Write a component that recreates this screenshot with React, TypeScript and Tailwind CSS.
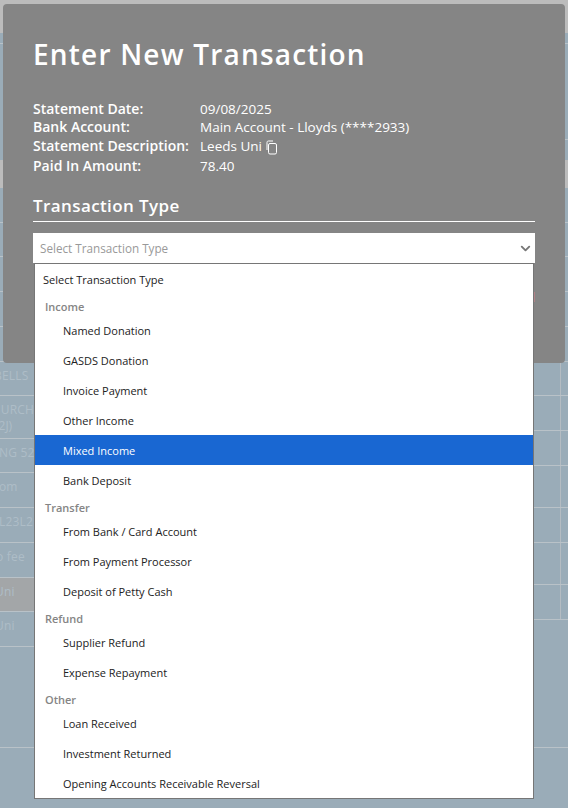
import React from 'react';
import { ChevronDown } from 'lucide-react';

const font = { fontFamily: '"Open Sans", sans-serif' };

const groups = [
  { label: 'Income', items: ['Named Donation', 'GASDS Donation', 'Invoice Payment', 'Other Income', 'Mixed Income', 'Bank Deposit'] },
  { label: 'Transfer', items: ['From Bank / Card Account', 'From Payment Processor', 'Deposit of Petty Cash'] },
  { label: 'Refund', items: ['Supplier Refund', 'Expense Repayment'] },
  { label: 'Other', items: ['Loan Received', 'Investment Returned', 'Opening Accounts Receivable Reversal'] },
];

const details = [
  { label: 'Statement Date:', value: '09/08/2025', cls: '' },
  { label: 'Bank Account:', value: 'Main Account - Lloyds (****2933)', cls: '' },
  { label: 'Statement Description:', value: 'Leeds Uni', copy: true, cls: 'mt-px' },
  { label: 'Paid In Amount:', value: '78.40', cls: 'mt-[2px]' },
];

const line = 'border-b border-[#b9c2c8]';
const cellText = 'block whitespace-nowrap pt-[6px] text-[12px] leading-[16px] tracking-[0.2px] text-[#aebdc7]';

function CopyIcon() {
  return (
    <svg width="12" height="15" viewBox="0 0 12 15" fill="none" stroke="white" strokeWidth="1" className="ml-[4px] mt-[3px]">
      <path d="M1 10V2.5C1 1.4 1.6 1 2.5 1H7" />
      <rect x="2.5" y="3.5" width="8" height="10.5" rx="1.5" />
    </svg>
  );
}

// the page table that shows round the edges of the dialog
function LeftColumn() {
  return (
    <div className="flex w-[284px] flex-col">
      <div className={`h-[11px] ${line}`} />
      <div className="h-[116px]" />
      <div className="h-[28px] bg-[#bcbcbc]" />
      <div className={`h-[35px] ${line}`} />
      <div className={`h-[34px] ${line}`} />
      <div className={`h-[35px] ${line}`} />
      <div className={`h-[35px] ${line}`} />
      <div className={`h-[35px] ${line}`} />
      <div className={`h-[34px] ${line}`}><span className={`${cellText} -ml-[6px]`}>BELLS</span></div>
      <div className={`h-[43px] ${line}`}>
        <span className={`${cellText} -ml-[16px]`}>CHURCH</span>
        <span className="-ml-[5px] block text-[12px] leading-[15px] text-[#aebdc7]">(2J)</span>
      </div>
      <div className={`h-[34px] ${line}`}><span className={`${cellText} -ml-[1px]`}>NG 52</span></div>
      <div className={`h-[35px] ${line}`}><span className={`${cellText} -ml-[7px]`}>com</span></div>
      <div className={`h-[35px] ${line}`}><span className={`${cellText} -ml-[1px]`}>L23L2</span></div>
      <div className={`h-[35px] ${line}`}><span className={`${cellText} -ml-[4px]`}>o fee</span></div>
      <div className={`h-[34px] bg-[#a3a6a8] ${line}`}><span className={`${cellText} -ml-[5px]`}>Uni</span></div>
      <div className={`h-[35px] ${line}`}><span className={`${cellText} -ml-[5px]`}>Uni</span></div>
      <div className={`h-[101px] ${line}`} />
    </div>
  );
}

function RightCell({ h }: { h: string }) {
  return (
    <div className={`${h} ${line}`}>
      <div className="ml-auto h-full w-[8px] border-l border-[#b4bcc2]" />
    </div>
  );
}

function RightColumn() {
  return (
    <div className="flex w-[284px] flex-col">
      <div className={`h-[11px] ${line}`} />
      <div className={`h-[96px] ${line}`} />
      <div className="h-[20px]" />
      <div className="h-[28px] bg-[#bcbcbc]" />
      <div className={`h-[35px] ${line}`} />
      <div className={`h-[34px] ${line}`} />
      <div className={`h-[35px] ${line}`} />
      <div className={`h-[35px] ${line}`} />
      <div className={`h-[35px] ${line}`} />
      <RightCell h="h-[34px]" />
      <RightCell h="h-[35px]" />
      <RightCell h="h-[35px]" />
      <RightCell h="h-[42px]" />
      <RightCell h="h-[35px]" />
      <RightCell h="h-[42px]" />
      <RightCell h="h-[35px]" />
      <div className={`h-[128px] ${line}`} />
    </div>
  );
}

export default function App() {
  return (
    <div className="relative h-[808px] w-[568px] overflow-hidden bg-[#9aacb8]" style={font}>
      <div className="h-[33px] bg-[#bcbcbc]" />
      <div className="flex">
        <LeftColumn />
        <RightColumn />
      </div>

      {/* modal */}
      <div className="absolute left-[3px] top-[4px] h-[359px] w-[562px] rounded-[4px] bg-[#858585] px-[30px] pt-[31px] text-white">
        <h1 className="text-[28px] font-semibold leading-[38px] tracking-[1.2px]">Enter New Transaction</h1>
        <div className="mt-[27px] flex flex-col leading-[18px]">
          {details.map((d) => (
            <div key={d.label} className={`flex ${d.cls}`}>
              <span className="w-[167px] text-[14px] font-semibold">{d.label}</span>
              <span className="text-[13.5px]">{d.value}</span>
              {d.copy && <CopyIcon />}
            </div>
          ))}
        </div>
        <h2 className="mt-[19px] border-b border-white pb-[3px] text-[17px] font-semibold leading-[24px] tracking-[0.4px]">Transaction Type</h2>
        <div className="mt-[11px] flex h-[30px] items-center justify-between bg-white pl-[7px] pr-[2px] text-[11.7px] text-[#999999]">
          <span className="pt-[2px]">Select Transaction Type</span>
          <ChevronDown size={15} strokeWidth={3} className="mt-[1px] text-[#777777]" />
        </div>
        <div className="absolute left-[531px] top-[288px] h-[10px] w-px bg-[#b08288]" />
      </div>

      {/* open dropdown */}
      <div className="absolute left-[34px] top-[263px] w-[500px] border border-[#767676] bg-white text-[11px] text-[#222222]">
        <div className="flex h-[30px] items-center pl-[8px] pt-[3px]">Select Transaction Type</div>
        {groups.map((g) => (
          <div key={g.label}>
            <div className="flex h-[21px] items-center pl-[10px] pt-[6px] font-semibold text-[#858585]">{g.label}</div>
            {g.items.map((item) => (
              <div
                key={item}
                className={`flex h-[30px] items-center pl-[28px] pt-[2px] ${item === 'Mixed Income' ? 'bg-[#1967d2] text-white' : ''}`}
              >
                {item}
              </div>
            ))}
          </div>
        ))}
      </div>
    </div>
  );
}
